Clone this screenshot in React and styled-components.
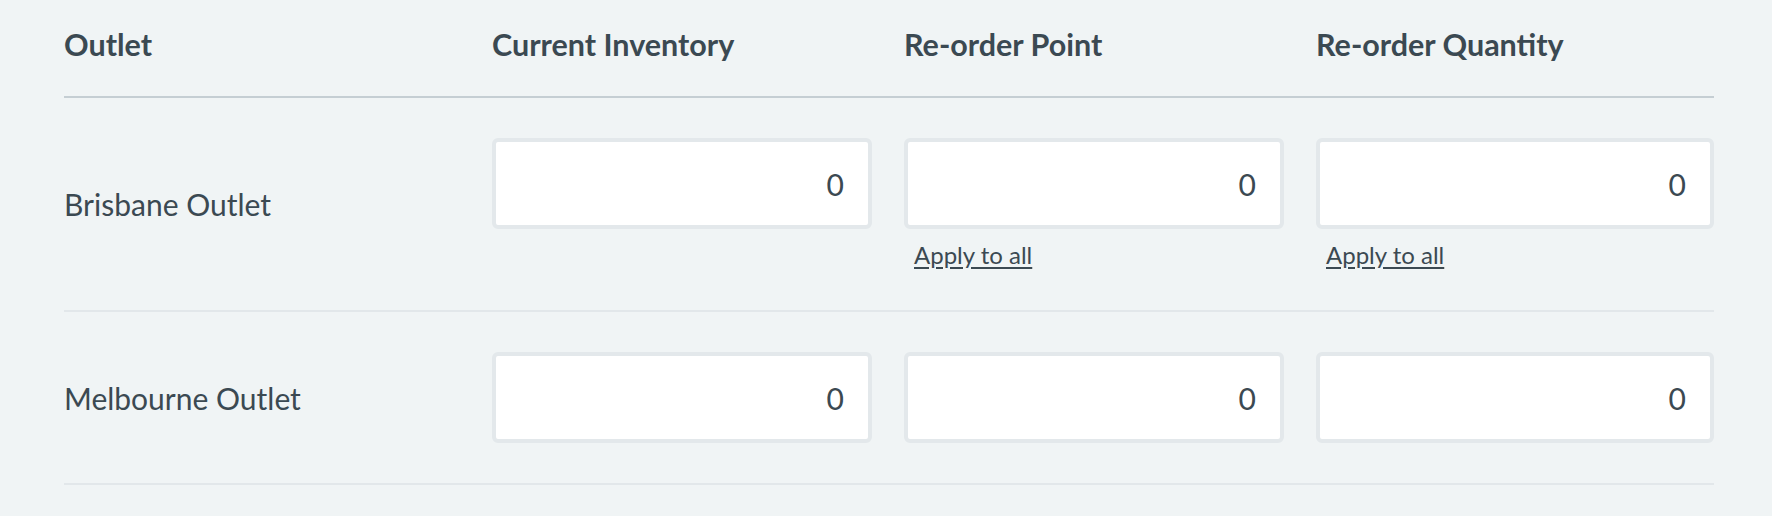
import React from "react";
import styled, { createGlobalStyle } from "styled-components";

const Global = createGlobalStyle`
  html, body { margin: 0; padding: 0; background: #f0f4f5; }
  body { font-family: Lato, "Noto Sans", sans-serif; color: #3b4952; }
  * { box-sizing: border-box; }
`;

const Page = styled.div`
  padding: 26px 58px 0 64px;
  background: #f0f4f5;
  min-height: 516px;
`;

const Grid = styled.div`
  display: grid;
  grid-template-columns: 428px 412px 412px 1fr;
`;

const HeadCell = styled.div`
  font-weight: 700;
  font-size: 30.5px;
  line-height: 36px;
  padding-bottom: 34px;
  border-bottom: 2px solid #c5ced3;
  color: #3b4952;
`;

const Cell = styled.div`
  padding: 40px ${(p) => (p.$last ? "0" : "32px")} 40px 0;
  border-bottom: 2px solid #e2e7ea;
  display: flex;
  flex-direction: column;
  justify-content: ${(p) => (p.$label ? "center" : "flex-start")};
`;

const Label = styled.div`
  font-size: 30px;
  line-height: 1.2;
  color: #3b4952;
`;

const Input = styled.input`
  width: 100%;
  height: 91px;
  border: 4px solid #e3e8eb;
  border-radius: 6px;
  background: #fff;
  text-align: right;
  padding: 0 24px;
  font-family: Lato, "Noto Sans", sans-serif;
  font-size: 30px;
  color: #3b4952;
  outline: none;
`;

const ApplyLink = styled.a`
  display: block;
  margin: 11px 0 0 10px;
  font-size: 24px;
  line-height: 30px;
  color: #3b4952;
  text-decoration: underline;
  text-underline-offset: 3px;
  cursor: pointer;
`;

const columns = ["Outlet", "Current Inventory", "Re-order Point", "Re-order Quantity"];

const rows = [
  { name: "Brisbane Outlet", apply: true },
  { name: "Melbourne Outlet", apply: false },
];

export default function App() {
  return (
    <>
      <Global />
      <Page>
        <Grid>
          {columns.map((c) => (
            <HeadCell key={c}>{c}</HeadCell>
          ))}
          {rows.map((r) => (
            <React.Fragment key={r.name}>
              <Cell $label>
                <Label>{r.name}</Label>
              </Cell>
              <Cell>
                <Input defaultValue="0" />
              </Cell>
              <Cell>
                <Input defaultValue="0" />
                {r.apply && <ApplyLink>Apply to all</ApplyLink>}
              </Cell>
              <Cell $last>
                <Input defaultValue="0" />
                {r.apply && <ApplyLink>Apply to all</ApplyLink>}
              </Cell>
            </React.Fragment>
          ))}
        </Grid>
      </Page>
    </>
  );
}
